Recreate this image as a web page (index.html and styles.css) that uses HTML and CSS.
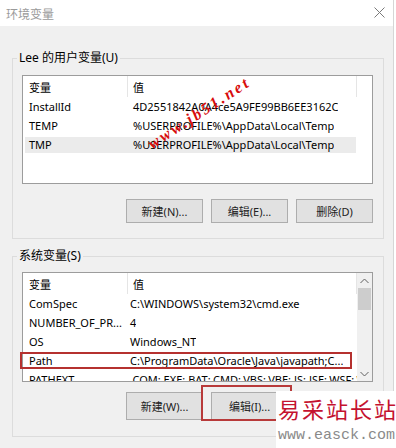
FILE: index.html
```html
<!DOCTYPE html>
<html lang="zh-CN">
<head>
<meta charset="utf-8">
<title>环境变量</title>
<link rel="stylesheet" href="styles.css">
</head>
<body>
<div class="window">
  <div class="titlebar">
    <span class="title">环境变量</span>
    <svg class="close" width="11" height="11" viewBox="0 0 11 11"><path d="M0.5 0.5 L10.5 10.5 M10.5 0.5 L0.5 10.5" stroke="#7a7a7a" stroke-width="1" fill="none"/></svg>
  </div>
  <div class="content">
    <fieldset class="group group-user">
      <legend>Lee 的用户变量(U)</legend>
      <div class="list">
        <div class="list-main">
          <div class="list-header"><span class="col1">变量</span><span class="col2">值</span></div>
          <div class="row"><span class="col1">InstallId</span><span class="col2">4D2551842A0A4ce5A9FE99BB6EE3162C</span></div>
          <div class="row"><span class="col1">TEMP</span><span class="col2">%USERPROFILE%\AppData\Local\Temp</span></div>
          <div class="row selected"><span class="col1">TMP</span><span class="col2">%USERPROFILE%\AppData\Local\Temp</span></div>
        </div>
        <span class="wm-jb51">www.jb51.net</span>
      </div>
      <div class="buttons">
        <div class="btn">新建(N)...</div>
        <div class="btn">编辑(E)...</div>
        <div class="btn">删除(D)</div>
      </div>
    </fieldset>
    <fieldset class="group group-sys">
      <legend>系统变量(S)</legend>
      <div class="list">
        <div class="list-main">
          <div class="list-header"><span class="col1">变量</span><span class="col2">值</span></div>
          <div class="row"><span class="col1">ComSpec</span><span class="col2">C:\WINDOWS\system32\cmd.exe</span></div>
          <div class="row"><span class="col1">NUMBER_OF_PR...</span><span class="col2">4</span></div>
          <div class="row"><span class="col1">OS</span><span class="col2">Windows_NT</span></div>
          <div class="row"><span class="col1">Path</span><span class="col2">C:\ProgramData\Oracle\Java\javapath;C...</span></div>
          <div class="row"><span class="col1">PATHEXT</span><span class="col2">.COM;.EXE;.BAT;.CMD;.VBS;.VBE;.JS;.JSE;.WSF;.WSH;.MSC</span></div>
        </div>
        <div class="scrollbar">
          <div class="sb-btn"><svg width="9" height="6" viewBox="0 0 9 6"><path d="M0.5 5 L4.5 1 L8.5 5" stroke="#606060" fill="none"/></svg></div>
          <div class="sb-thumb"></div>
          <div class="sb-track"></div>
          <div class="sb-btn"><svg width="9" height="6" viewBox="0 0 9 6"><path d="M0.5 1 L4.5 5 L8.5 1" stroke="#606060" fill="none"/></svg></div>
        </div>
        <span class="mark-path"></span>
      </div>
      <div class="buttons buttons-tall">
        <div class="btn">新建(W)...</div>
        <div class="btn btn-marked">编辑(I)...</div>
        <div class="btn">删除(L)</div>
      </div>
    </fieldset>
  </div>
</div>
<div class="wm-easck">
  <div class="wm-cn">易采站长站</div>
  <div class="wm-url">www.easck.com</div>
</div>
</body>
</html>
```
FILE: styles.css
```css
* { box-sizing: border-box; }
html, body { margin: 0; padding: 0; background: #ffffff; }
body {
  width: 396px;
  height: 448px;
  overflow: hidden;
  position: relative;
  font-family: "Noto Sans", "Noto Sans CJK SC", sans-serif;
  font-size: 11px;
  color: #000;
}
.window {
  width: 394px;
  height: 448px;
  background: #f0f0f0;
  border-right: 1px solid #d6d6d6;
}
.titlebar {
  height: 26px;
  background: #ffffff;
  display: flex;
  align-items: center;
  justify-content: space-between;
  padding: 0 8px 0 6px;
}
.title {
  color: #9a9a9a;
  font-family: "Noto Sans CJK SC", sans-serif;
  font-size: 12px;
}
.close { display: block; margin-top: -2px; }
.content { padding-left: 12px; }
.group {
  width: 372px;
  margin: 24px 0 0 0;
  padding: 9px 10px 15px 9px;
  border: 1px solid #dcdcdc;
  min-width: 0;
}
.group-sys { margin-top: 9px; padding: 8px 10px 16px 9px; }
legend {
  font-family: "Noto Sans", "Noto Sans CJK SC", sans-serif;
  font-size: 12px;
  line-height: 16px;
  padding: 0 2px;
  margin-left: -5px;
}
.list {
  position: relative;
  height: 109px;
  border: 1px solid #9c9c9c;
  background: #ffffff;
  display: flex;
}
.group-sys .list { height: 110px; }
.list-main {
  width: 334px;
  display: flex;
  flex-direction: column;
  overflow: hidden;
}
.list-header {
  height: 21px;
  flex-shrink: 0;
  display: flex;
  align-items: stretch;
  border-right: 1px solid #e5e5e5;
}
.list-header .col1 { border-right: 1px solid #e5e5e5; }
.list-header span { display: flex; align-items: center; }
.row {
  height: 19px;
  flex-shrink: 0;
  display: flex;
  align-items: center;
  white-space: nowrap;
}
.row.selected {
  background: #ebebeb;
  box-shadow: inset 2px 2px 0 #fff, inset -1px -1px 0 #fff;
}
.col1 {
  width: 105px;
  flex-shrink: 0;
  padding-left: 6px;
  white-space: nowrap;
  overflow: hidden;
}
.col2 {
  padding-left: 5px;
  white-space: nowrap;
  overflow: hidden;
}
.group-sys .row .col2 { padding-left: 2px; }
.scrollbar {
  width: 15px;
  background: #f0f0f0;
  display: flex;
  flex-direction: column;
}
.sb-btn {
  height: 15px;
  display: flex;
  align-items: center;
  justify-content: center;
  flex-shrink: 0;
}
.sb-thumb {
  height: 22px;
  margin: 0 1px;
  background: #cdcdcd;
  flex-shrink: 0;
}
.sb-track { flex: 1; }
.mark-path {
  position: absolute;
  left: -3px;
  top: 79px;
  width: 332px;
  height: 17px;
  border: 2px solid #b5312f;
}
.wm-jb51 {
  position: absolute;
  left: 117px;
  top: 28px;
  font-family: "Liberation Serif", serif;
  font-weight: bold;
  font-style: italic;
  font-size: 16px;
  line-height: 18px;
  letter-spacing: 2.5px;
  color: #d80c0c;
  transform: rotate(-33deg);
  white-space: nowrap;
}
.buttons {
  display: flex;
  justify-content: flex-end;
  gap: 8px;
  margin-top: 15px;
}
.buttons-tall { margin-top: 10px; }
.btn {
  position: relative;
  width: 77px;
  height: 24px;
  background: #e1e1e1;
  border: 1px solid #adadad;
  display: flex;
  align-items: center;
  justify-content: center;
  font-family: "Noto Sans", "Noto Sans CJK SC", sans-serif;
  font-size: 11px;
  color: #222;
}
.buttons-tall .btn { height: 28px; }
.btn-marked::after {
  content: "";
  position: absolute;
  left: -11px;
  right: -5px;
  top: -8px;
  bottom: -2px;
  border: 2px solid #b83a3a;
}
.wm-easck {
  position: absolute;
  left: 276px;
  top: 391px;
  width: 120px;
  height: 57px;
  background: #ffffff;
  padding: 3px 0 0 2px;
}
.wm-cn {
  font-family: "Noto Sans CJK SC", sans-serif;
  font-size: 22px;
  line-height: 28px;
  letter-spacing: 2px;
  color: #c4122f;
  white-space: nowrap;
}
.wm-url {
  font-family: "Liberation Mono", monospace;
  font-size: 15px;
  line-height: 18px;
  margin-top: 5px;
  color: #8a8a8a;
  white-space: nowrap;
}
```
